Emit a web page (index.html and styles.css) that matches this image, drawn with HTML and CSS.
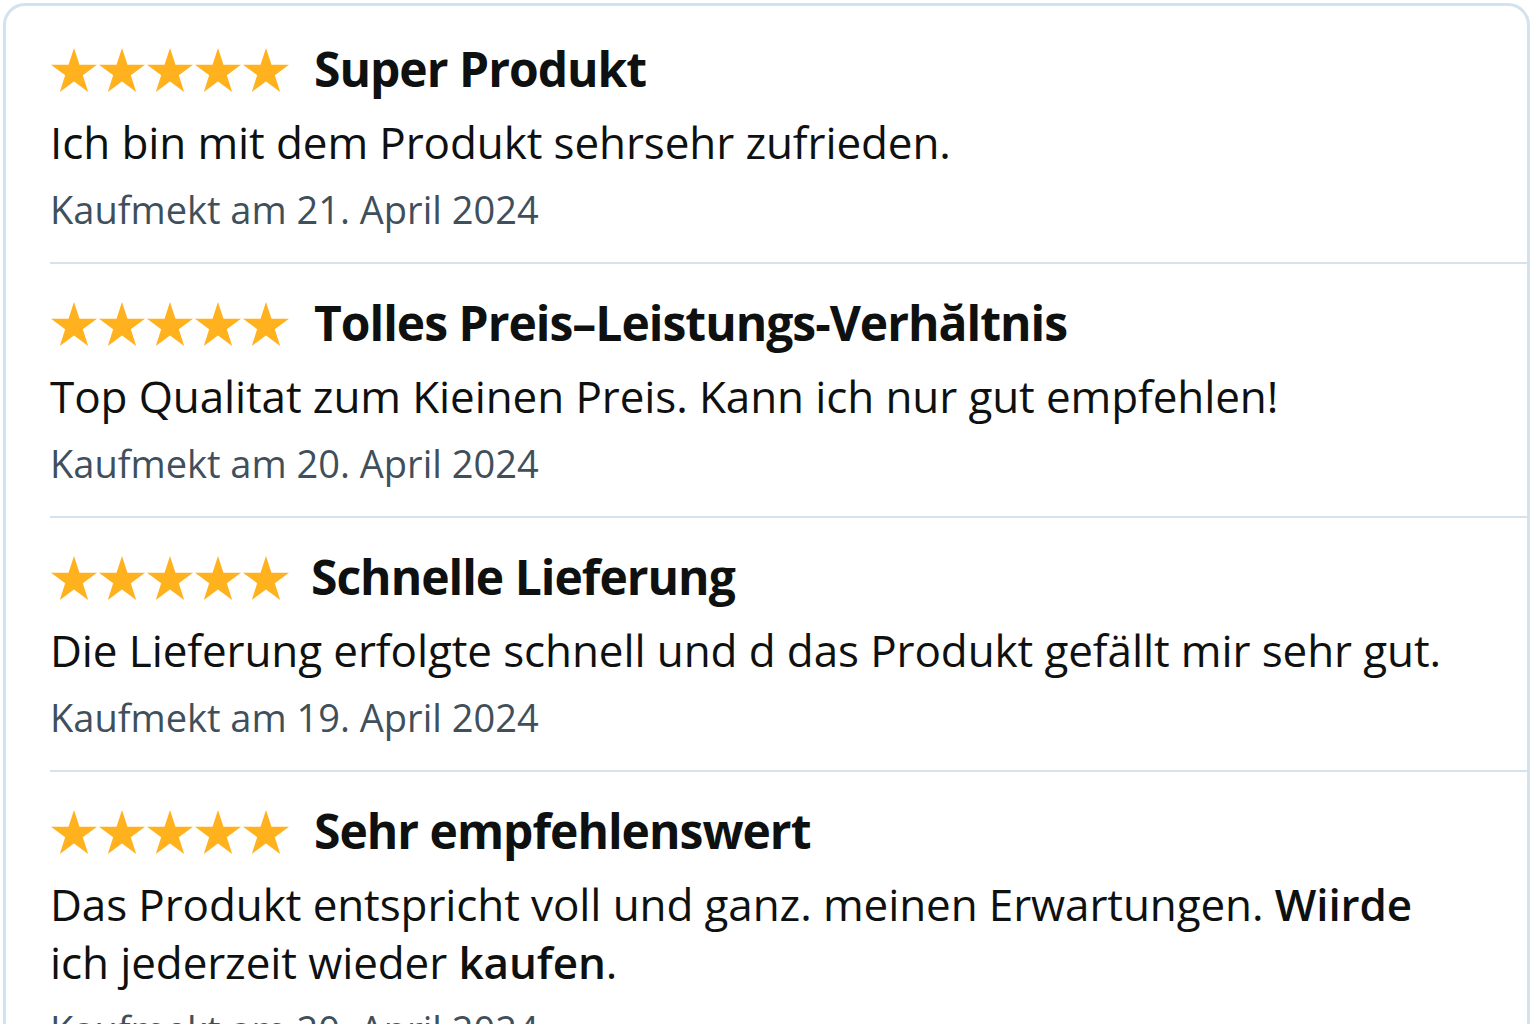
FILE: index.html
```html
<!DOCTYPE html>
<html lang="de">
<head>
<meta charset="utf-8">
<title>Rezensionen</title>
<link rel="stylesheet" href="styles.css">
</head>
<body>
<svg width="0" height="0" class="defs" aria-hidden="true">
  <defs>
    <symbol id="star" viewBox="0 0 95.1 90.45">
      <polygon points="47.55,0 58.9,34.55 95.1,34.55 65.8,55.9 76.94,90.45 47.55,69.1 18.16,90.45 29.3,55.9 0,34.55 36.2,34.55"/>
    </symbol>
  </defs>
</svg>
<div class="card">
  <div class="review">
    <div class="head">
      <div class="stars">
        <svg class="star"><use href="#star"/></svg><svg class="star"><use href="#star"/></svg><svg class="star"><use href="#star"/></svg><svg class="star"><use href="#star"/></svg><svg class="star"><use href="#star"/></svg>
      </div>
      <h2 class="title">Super Produkt</h2>
    </div>
    <p class="text">Ich bin mit dem Produkt sehrsehr zufrieden.</p>
    <p class="date">Kaufmekt am 21. April 2024</p>
  </div>
  <div class="review">
    <div class="head">
      <div class="stars">
        <svg class="star"><use href="#star"/></svg><svg class="star"><use href="#star"/></svg><svg class="star"><use href="#star"/></svg><svg class="star"><use href="#star"/></svg><svg class="star"><use href="#star"/></svg>
      </div>
      <h2 class="title">Tolles Preis–Leistungs-Verhăltnis</h2>
    </div>
    <p class="text">Top Qualitat zum Kieinen Preis. Kann ich nur gut empfehlen!</p>
    <p class="date">Kaufmekt am 20. April 2024</p>
  </div>
  <div class="review">
    <div class="head">
      <div class="stars">
        <svg class="star"><use href="#star"/></svg><svg class="star"><use href="#star"/></svg><svg class="star"><use href="#star"/></svg><svg class="star"><use href="#star"/></svg><svg class="star"><use href="#star"/></svg>
      </div>
      <h2 class="title title-tight">Schnelle Lieferung</h2>
    </div>
    <p class="text">Die Lieferung erfolgte schnell und d das Produkt gefällt mir sehr gut.</p>
    <p class="date">Kaufmekt am 19. April 2024</p>
  </div>
  <div class="review">
    <div class="head">
      <div class="stars">
        <svg class="star"><use href="#star"/></svg><svg class="star"><use href="#star"/></svg><svg class="star"><use href="#star"/></svg><svg class="star"><use href="#star"/></svg><svg class="star"><use href="#star"/></svg>
      </div>
      <h2 class="title">Sehr empfehlenswert</h2>
    </div>
    <p class="text">Das Produkt entspricht voll <span class="med">und ganz</span>. meinen Erwartungen. <span class="semi">Wiirde</span> ich jederzeit wieder <span class="semi">kaufen</span>.</p>
    <p class="date">Kaufmekt am 20. April 2024</p>
  </div>
</div>
</body>
</html>
```

FILE: styles.css
```css
html, body {
  margin: 0;
  padding: 0;
  background: #ffffff;
}
body {
  font-family: "Open Sans", "Noto Sans", sans-serif;
  color: #0f1111;
  overflow: hidden;
  height: 1024px;
}
.defs {
  position: absolute;
  width: 0;
  height: 0;
}
.card {
  margin: 3px 0 0 3px;
  width: 1521px;
  border: 3px solid #d2e2ef;
  border-radius: 22px;
  padding-top: 4px;
  min-height: 1100px;
  background: #ffffff;
}
.review {
  margin-left: 44px;
  padding: 29px 0 29px 0;
  border-bottom: 2px solid #d5e3ee;
}
.head {
  display: flex;
  align-items: center;
  height: 60px;
}
.stars {
  display: flex;
  gap: 2px;
  margin-left: 1px;
  margin-top: 2px;
}
.star {
  width: 46px;
  height: 44px;
  fill: #ffb21e;
}
.title {
  margin: 0 0 0 25px;
  font-size: 48px;
  line-height: 60px;
  font-weight: 700;
  letter-spacing: -1px;
  color: #0f1111;
}
.title-tight {
  margin-left: 22px;
}
.text {
  margin: 14px 67px 0 0;
  font-size: 44px;
  line-height: 58px;
  letter-spacing: -0.1px;
  font-weight: 400;
}
.med {
  font-weight: 500;
}
.semi {
  font-weight: 600;
}
.date {
  margin: 14px 0 0;
  font-size: 38px;
  line-height: 48px;
  color: #3f505c;
}
```
